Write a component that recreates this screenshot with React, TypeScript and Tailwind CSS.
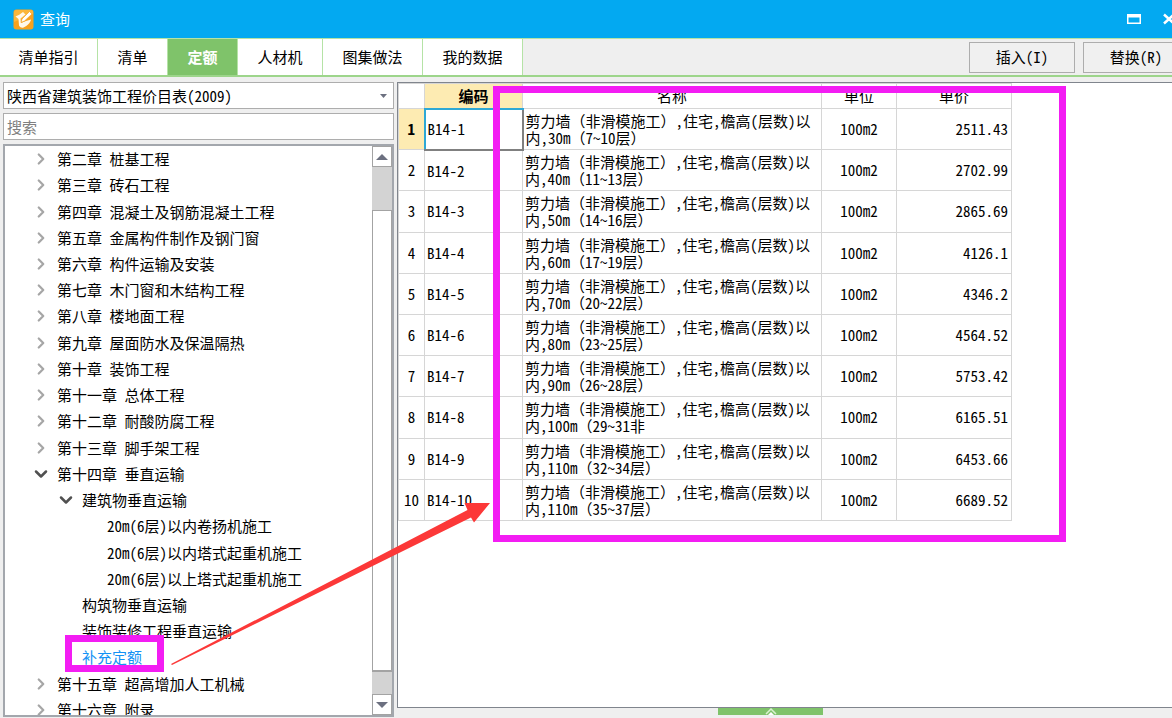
import { useState } from "react";
import clsx from "clsx";
import { ChevronDown, ChevronRight } from "lucide-react";

const tabs = [
  { label: "清单指引", width: "w-[98px]" },
  { label: "清单", width: "w-[70px]" },
  { label: "定额", width: "w-[70px]" },
  { label: "人材机", width: "w-[85px]" },
  { label: "图集做法", width: "w-[100px]" },
  { label: "我的数据", width: "w-[100px]" },
];

type TreeNode = {
  label: string;
  level: 1 | 2 | 3;
  state: "closed" | "open" | "leaf";
};

const treeNodes: TreeNode[] = [
  { label: "第二章 桩基工程", level: 1, state: "closed" },
  { label: "第三章 砖石工程", level: 1, state: "closed" },
  { label: "第四章 混凝土及钢筋混凝土工程", level: 1, state: "closed" },
  { label: "第五章 金属构件制作及钢门窗", level: 1, state: "closed" },
  { label: "第六章 构件运输及安装", level: 1, state: "closed" },
  { label: "第七章 木门窗和木结构工程", level: 1, state: "closed" },
  { label: "第八章 楼地面工程", level: 1, state: "closed" },
  { label: "第九章 屋面防水及保温隔热", level: 1, state: "closed" },
  { label: "第十章 装饰工程", level: 1, state: "closed" },
  { label: "第十一章 总体工程", level: 1, state: "closed" },
  { label: "第十二章 耐酸防腐工程", level: 1, state: "closed" },
  { label: "第十三章 脚手架工程", level: 1, state: "closed" },
  { label: "第十四章 垂直运输", level: 1, state: "open" },
  { label: "建筑物垂直运输", level: 2, state: "open" },
  { label: "20m(6层)以内卷扬机施工", level: 3, state: "leaf" },
  { label: "20m(6层)以内塔式起重机施工", level: 3, state: "leaf" },
  { label: "20m(6层)以上塔式起重机施工", level: 3, state: "leaf" },
  { label: "构筑物垂直运输", level: 2, state: "leaf" },
  { label: "装饰装修工程垂直运输", level: 2, state: "leaf" },
  { label: "补充定额", level: 2, state: "leaf" },
  { label: "第十五章 超高增加人工机械", level: 1, state: "closed" },
  { label: "第十六章 附录", level: 1, state: "closed" },
];

const indent = {
  1: "pl-[28px]",
  2: "pl-[53px]",
  3: "pl-[78px]",
};

const rows = [
  { code: "B14-1", range: "内,30m（7~10层）", price: "2511.43" },
  { code: "B14-2", range: "内,40m（11~13层）", price: "2702.99" },
  { code: "B14-3", range: "内,50m（14~16层）", price: "2865.69" },
  { code: "B14-4", range: "内,60m（17~19层）", price: "4126.1" },
  { code: "B14-5", range: "内,70m（20~22层）", price: "4346.2" },
  { code: "B14-6", range: "内,80m（23~25层）", price: "4564.52" },
  { code: "B14-7", range: "内,90m（26~28层）", price: "5753.42" },
  { code: "B14-8", range: "内,100m（29~31非", price: "6165.51" },
  { code: "B14-9", range: "内,110m（32~34层）", price: "6453.66" },
  { code: "B14-10", range: "内,110m（35~37层）", price: "6689.52" },
];

const TitleBar = () => (
  <header className="flex h-[38px] shrink-0 items-center justify-between bg-[#03a9f1] text-white">
    <div className="flex items-center gap-[6px] pl-[13px]">
      <svg width="21" height="21" viewBox="0 0 21 21" aria-hidden="true">
        <rect x="0.5" y="0.5" width="20" height="20" rx="3" fill="#f7a11d" />
        <path d="M1 3.5Q1 1 3.5 1H17.5Q20 1 20 3.5V5L1 13Z" fill="#fbb63a" />
        <path
          d="M2.500 7.500C5 6.500 7.500 5 10 3L12.500 5.500 7.500 9.500 8 14 13 12 18 10.500C17.500 13.500 14.500 17 10.500 18.500 9 19 7 18.500 6 16.500L5.500 10Z"
          fill="#fff8ea"
        />
        <path d="M16.500 2.500 19 5 11.500 12 8 13.500 9 10Z" fill="#fff" stroke="#f7a11d" strokeWidth="0.7" />
      </svg>
      <h1 className="text-[15px] leading-5">查询</h1>
    </div>
    <div className="-mr-[3px] flex items-center gap-[21px]">
      <button type="button" aria-label="最大化">
        <svg width="15" height="12" viewBox="0 0 15 12">
          <path d="M0 1H14V11H0ZM1.500 4.500V9.500H12.500V4.500Z" fill="#fff" fillRule="evenodd" />
        </svg>
      </button>
      <button type="button" aria-label="关闭">
        <svg width="12" height="12" viewBox="0 0 12 12">
          <path d="M1 1.500 11 10.500M11 1.500 1 10.500" stroke="#fff" strokeWidth="2.500" />
        </svg>
      </button>
    </div>
  </header>
);

const QuotaTree = () => {
  const [selected, setSelected] = useState("补充定额");

  return (
    <div className="flex min-h-0 flex-1 overflow-hidden border-2 border-[#a3a7ad] bg-white">
      <ul className="grid h-[577px] flex-1 auto-rows-fr">
        {treeNodes.map((node) => (
          <li key={node.label} className="flex">
            <button
              type="button"
              onClick={() => setSelected(node.label)}
              className={clsx(
                "flex flex-1 items-center gap-2 text-left whitespace-pre",
                indent[node.level],
                selected === node.label && "text-[#1492f5]"
              )}
            >
              <span className="flex w-4 justify-center">
                {node.state === "closed" && (
                  <ChevronRight className="size-[18px] shrink-0 text-[#a6a6a6]" strokeWidth={3} />
                )}
                {node.state === "open" && (
                  <ChevronDown className="size-5 shrink-0 text-[#505050]" strokeWidth={3} />
                )}
              </span>
              {node.label}
            </button>
          </li>
        ))}
      </ul>

      {/* Scroll bar */}
      <div className="flex w-5 flex-col bg-[#d3d3d3]">
        <button
          type="button"
          aria-label="向上滚动"
          className="flex h-[21px] items-center justify-center border border-[#a3a3a3] bg-white"
        >
          <svg width="12" height="6" viewBox="0 0 12 6">
            <path d="M0 6 6 0 12 6Z" fill="#6c7080" />
          </svg>
        </button>
        <div className="mt-[43px] mb-[22px] flex-1 border border-b-2 border-[#a3a3a3] bg-white" />
        <button
          type="button"
          aria-label="向下滚动"
          className="flex h-[21px] items-center justify-center border border-[#a3a3a3] bg-white"
        >
          <svg width="12" height="6" viewBox="0 0 12 6">
            <path d="M0 0H12L6 6Z" fill="#6c7080" />
          </svg>
        </button>
      </div>
    </div>
  );
};

// Latin text is half width, but （ and ） keep their full width
const FullWidthParens = ({ text }: { text: string }) => (
  <>
    {text.split(/([（）])/).map((part, i) =>
      part === "（" || part === "）" ? (
        <span key={i} className="[font-feature-settings:normal]">
          {part}
        </span>
      ) : (
        part
      )
    )}
  </>
);

const QuotaTable = () => (
  <table className="h-[438px] w-[613px] table-fixed border-collapse">
    <colgroup>
      <col className="w-[26px]" />
      <col className="w-[98px]" />
      <col className="w-[299px]" />
      <col className="w-[75px]" />
      <col className="w-[115px]" />
    </colgroup>
    <thead>
      <tr className="h-[25px]">
        <th className="border border-[#d6d6d6] p-0" aria-label="序号" />
        <th className="border border-b-2 border-[#d6d6d6] border-b-[#2ea8d5] bg-[#fdebb2] p-0 font-bold">
          编码
        </th>
        <th className="border border-[#d6d6d6] p-0 font-normal">名称</th>
        <th className="border border-[#d6d6d6] p-0 font-normal">单位</th>
        <th className="border border-[#d6d6d6] p-0 font-normal">单价</th>
      </tr>
    </thead>
    <tbody>
      {rows.map((row, i) => (
        <tr key={row.code}>
          <th
            scope="row"
            className={clsx(
              "border border-[#d6d6d6] p-0",
              i === 0 ? "bg-[#fdebb2] font-bold" : "font-normal"
            )}
          >
            {i + 1}
          </th>
          <td
            className={clsx(
              "border px-[2px] py-0",
              i === 0
                ? "border-2 border-t-[#2ea8d5] border-r-[#808080] border-b-[#808080] border-l-[#2ea8d5]"
                : "border-[#d6d6d6]"
            )}
          >
            {row.code}
          </td>
          <td className="border border-[#d6d6d6] px-[2px] py-0 leading-[17px] whitespace-nowrap">
            <FullWidthParens text="剪力墙（非滑模施工）,住宅,檐高(层数)以" />
            <br />
            <FullWidthParens text={row.range} />
          </td>
          <td className="border border-[#d6d6d6] p-0 text-center">100m2</td>
          <td className="border border-[#d6d6d6] px-[3px] py-0 text-right">{row.price}</td>
        </tr>
      ))}
    </tbody>
  </table>
);

// Highlight boxes and the arrow pointing from the tree to the table
const Annotations = () => (
  <div className="pointer-events-none">
    <div className="absolute top-[86px] left-[493px] h-[456px] w-[573px] border-7 border-[#f31df3]" />
    <div className="absolute top-[635px] left-[65px] h-[37px] w-[99px] border-7 border-[#f31df3]" />
    <svg
      className="absolute top-[500px] left-[170px]"
      width="322"
      height="166"
      viewBox="170 500 322 166"
      aria-hidden="true"
    >
      <path d="M171 664 467.500 510 464.500 503H490L474 522.500 471 517.500 172 665Z" fill="#fc3838" />
    </svg>
  </div>
);

const App = () => {
  const [activeTab, setActiveTab] = useState("定额");

  return (
    <div className="relative flex h-screen flex-col overflow-hidden bg-[#efefef] font-['Noto_Sans_CJK_SC',sans-serif] text-[15px] leading-5 text-black [font-feature-settings:'hwid']">
      <TitleBar />

      {/* Tabs and actions */}
      <div className="flex h-[39px] shrink-0 items-stretch justify-between border-t border-b-2 border-t-[#b5e3a6] border-b-[#9dd58b]">
        <nav className="flex">
          {tabs.map((tab) => (
            <button
              key={tab.label}
              type="button"
              onClick={() => setActiveTab(tab.label)}
              className={clsx(
                "border-r border-[#b5e3a6]",
                tab.width,
                activeTab === tab.label ? "bg-[#7fc36a] font-bold text-white" : "bg-white"
              )}
            >
              {tab.label}
            </button>
          ))}
        </nav>
        <div className="-mr-[17px] flex items-center gap-2">
          <button type="button" className="h-[31px] w-[106px] border border-[#adadad] bg-[#f0f0f0]">
            插入(I)
          </button>
          <button type="button" className="h-[31px] w-[106px] border border-[#adadad] bg-[#f0f0f0]">
            替换(R)
          </button>
        </div>
      </div>

      <main className="flex min-h-0 flex-1 gap-[3px] pt-[5px] pl-[3px]">
        <aside className="flex w-[391px] shrink-0 flex-col gap-1 pb-px">
          <div className="relative shrink-0">
            <select
              aria-label="定额库"
              className="block h-[27px] w-full appearance-none border border-[#adadad] bg-white px-[3px]"
            >
              <option>陕西省建筑装饰工程价目表(2009)</option>
            </select>
            <svg
              className="pointer-events-none absolute top-3 right-[7px]"
              width="7"
              height="4"
              viewBox="0 0 7 4"
              aria-hidden="true"
            >
              <path d="M0 0H7L3.500 4Z" fill="#6c7080" />
            </svg>
          </div>
          <input
            type="text"
            aria-label="搜索"
            placeholder="搜索"
            className="h-[27px] shrink-0 border border-[#adadad] bg-white px-[3px] outline-none placeholder:text-[#808080]"
          />
          <QuotaTree />
        </aside>

        <section className="flex min-w-0 flex-1 flex-col">
          <div className="min-h-0 flex-1 overflow-hidden border-y border-l border-[#80858d] bg-white">
            <QuotaTable />
          </div>
          <div className="flex h-[10px] shrink-0 justify-center">
            <button
              type="button"
              aria-label="展开"
              className="mr-[28px] flex h-[7px] w-[105px] items-end justify-center bg-[#7fc36a]"
            >
              <svg width="12" height="7" viewBox="0 0 12 7">
                <path d="M1 6 6 1 11 6" fill="none" stroke="#d9f2d0" strokeWidth="1.500" />
                <path d="M3 7 6 4 9 7Z" fill="#fff" />
              </svg>
            </button>
          </div>
        </section>
      </main>

      <Annotations />
    </div>
  );
};

export default App;
